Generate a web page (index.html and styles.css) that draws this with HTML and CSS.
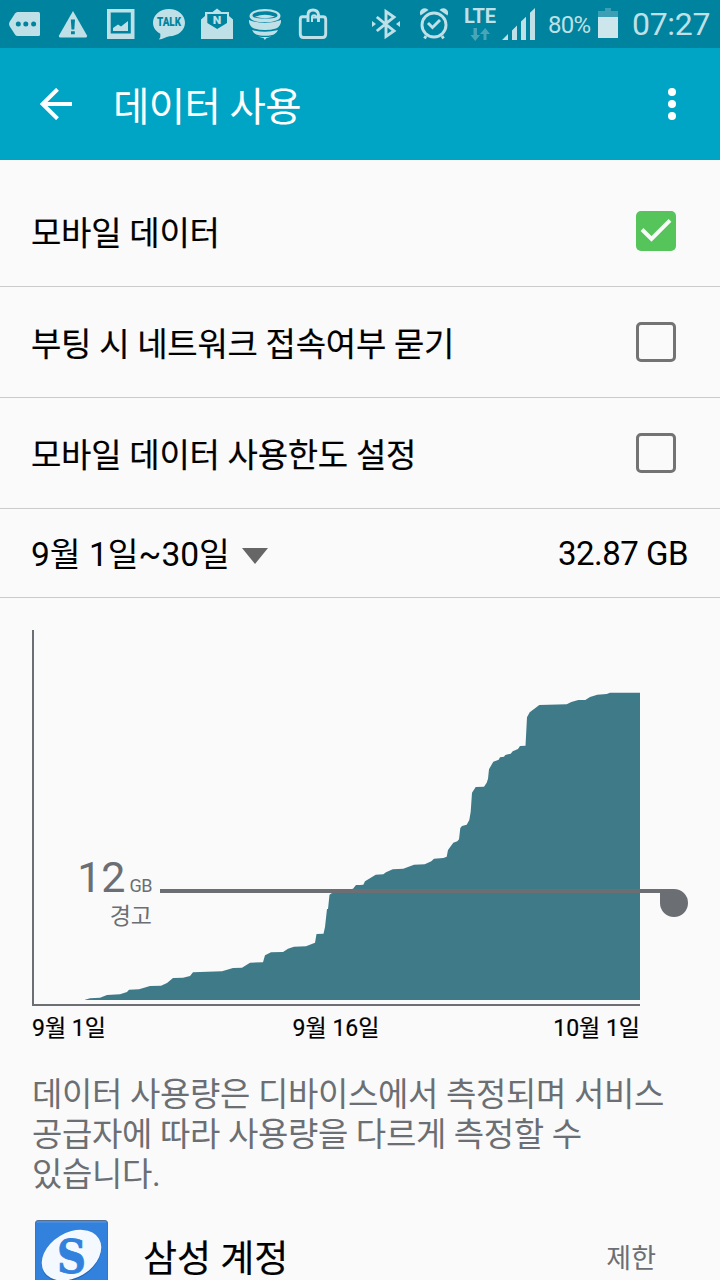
FILE: index.html
```html
<!DOCTYPE html>
<html lang="ko">
<head>
  <meta charset="UTF-8" />
  <meta name="viewport" content="width=device-width, initial-scale=1.0"/>
  <title>데이터 사용</title>
  <link rel="stylesheet" href="styles.css">
</head>
<body>
  <div class="status-bar">
    <div class="status-left">
      <!-- more notifications -->
      <svg class="status-icon" viewBox="0 0 48 48">
        <path class="fill" d="M17.500 12H38.500Q40 12 40 13.500V34.500Q40 36 38.500 36H17.500Q16 36 15 34.500L9.500 26Q8.500 24 9.500 22L15 13.500Q16 12 17.500 12Z"/>
        <circle class="hole" cx="18.300" cy="24" r="2.500"/>
        <circle class="hole" cx="25.800" cy="24" r="2.500"/>
        <circle class="hole" cx="33.600" cy="24" r="2.500"/>
      </svg>
      <!-- warning -->
      <svg class="status-icon" viewBox="0 0 48 48">
        <path class="fill" d="M25 11L39 35.500Q39.300 37.500 38 37.500H12Q10.700 37.500 11 35.500Z"/>
        <path class="hole" d="M22.800 19.500H27L26.300 29.500H23.500ZM23 31.300H26.800V34.300H23Z"/>
      </svg>
      <!-- screenshot saved -->
      <svg class="status-icon" viewBox="0 0 48 48">
        <path class="fill" fill-rule="evenodd" d="M11 9H38.500V39H11ZM14.700 12.500V33.500H34.800V12.500Z"/>
        <path class="fill" d="M17 31V28L22 24.500L25 26.500L32 21V31Z"/>
      </svg>
      <!-- talk -->
      <svg class="status-icon" viewBox="0 0 48 48">
        <path class="fill" d="M25 9C34 9 41 15 41 22.800C41 30.500 34 36 25.500 36.300C21.500 36.800 19 39.500 15 39.500Q17 37 16.300 33.800C12 31.500 9 27.500 9 22.800C9 15 16 9 25 9Z"/>
        <text class="talk-text" x="25" y="26.300" textLength="24" lengthAdjust="spacingAndGlyphs">TALK</text>
      </svg>
      <!-- mail -->
      <svg class="status-icon" viewBox="0 0 48 48">
        <path class="fill" d="M9 19.500L13 16V12H20.500L25 8.500L29.500 12H37V16L41 19.500V39H9Z"/>
        <path class="hole" d="M15.300 14H35V23L25.200 29L15.300 23Z"/>
        <text class="mail-text" x="25" y="23.500" textLength="8.500" lengthAdjust="spacingAndGlyphs">N</text>
      </svg>
      <!-- honeycomb pot -->
      <svg class="status-icon" viewBox="0 0 48 48">
        <path class="fill" fill-rule="evenodd" d="M25 9C34 9 40.500 12 40.500 16C40.500 20.500 33 22.300 25 22.300S9.500 20.500 9.500 16C9.500 12 16 9 25 9ZM25 11.300C18 11.300 12.500 13 12.500 15.500S18 18.500 25 18.500S37.500 18 37.500 15.500S32 11.300 25 11.300Z"/>
        <path class="fill" d="M15 16.800Q25 12.500 35 16.800Q25 19.500 15 16.800ZM9 20Q25 26 41 20Q41.500 26 36 28.500Q25 31.500 14 28.500Q8.500 26 9 20ZM12 30Q25 33.500 38 30Q36 34.500 31 35.300Q25 36.300 19 35.300Q14 34.500 12 30ZM18.500 36.500Q25 37.500 31.500 36.500Q28 37.800 26.500 38L24.800 40L23.500 38Q21 37.800 18.500 36.500Z"/>
      </svg>
      <!-- app store bag -->
      <svg class="status-icon" viewBox="0 0 48 48">
        <path class="line" d="M20 16.700H14.500Q12.300 16.700 12.300 19.500V34Q12.300 37.500 15.500 37.500H34.500Q37.700 37.500 37.700 34V19.500Q37.700 16.700 35 16.700H30.500V22"/>
        <path class="line" d="M20 22V15Q20 10 25 10Q30 10 30.500 15V18"/>
        <path class="line thin" d="M24 22V17Q24 15 26.500 15.200Q28 15.200 28.500 17M24 17.500H30"/>
      </svg>
    </div>
    <div class="status-right">
      <!-- bluetooth -->
      <svg class="status-icon" viewBox="0 0 48 48">
        <path class="line" d="M14.800 17L32 31L24 36.500V11.500L32 17L14.800 31"/>
        <path class="fill" d="M10 21L14 24L10 27ZM38 21L34 24L38 27Z"/>
      </svg>
      <!-- alarm -->
      <svg class="status-icon" viewBox="0 0 48 48">
        <circle class="line" cx="24" cy="25" r="12"/>
        <path class="line" d="M18 23L22.500 27.500L30 20"/>
        <path class="line" d="M16 36L14.500 38.500M32 36L33.500 38.500"/>
        <path class="fill" d="M10.500 15.500Q8.500 10.500 13 8.500Q16.500 7.500 18.500 10ZM37.500 15.500Q39.500 10.500 35 8.500Q31.500 7.500 29.500 10Z"/>
      </svg>
      <div class="lte">
        <span>LTE</span>
        <svg class="lte-arrows" viewBox="0 0 20 14">
          <path d="M3.500 0H7V7H10L5.200 13L0.500 7H3.500ZM13.500 12V6H10L15.200 0L20 6H16.500V12Z"/>
        </svg>
      </div>
      <svg class="signal" viewBox="0 0 34 33">
        <path class="fill" d="M0 32L6 26V32ZM10 32V22.500L15 17.500V32ZM19 32V13.500L24 8.700V32ZM28 32V4.700L33 0V32Z"/>
      </svg>
      <span class="battery-text">80%</span>
      <svg class="battery" viewBox="0 0 20 30">
        <path class="battery-empty" d="M7 0H13V3H20V9H0V3H7Z"/>
        <path class="battery-full" d="M0 9H20V30H0Z"/>
      </svg>
      <span class="clock">07:27</span>
    </div>
  </div>

  <header>
    <button class="back-btn" aria-label="뒤로">
      <svg width="32" height="32" viewBox="0 0 32 32">
        <path d="M32 16H3M17.500 1.300L2.500 16L17.500 30.700"/>
      </svg>
    </button>
    <h1 class="title">데이터 사용</h1>
    <button class="menu-btn" aria-label="메뉴">
      <svg width="8" height="32" viewBox="0 0 8 32">
        <circle cx="4" cy="4" r="4"/>
        <circle cx="4" cy="16" r="4"/>
        <circle cx="4" cy="28" r="4"/>
      </svg>
    </button>
  </header>

  <div class="settings">
    <div class="row">
      <span class="row-label">모바일 데이터</span>
      <span class="checkbox checked">
        <svg width="40" height="40" viewBox="0 0 40 40"><path d="M6 18.500L15.500 28L34 9.300"/></svg>
      </span>
    </div>
    <div class="row">
      <span class="row-label">부팅 시 네트워크 접속여부 묻기</span>
      <span class="checkbox"></span>
    </div>
    <div class="row">
      <span class="row-label">모바일 데이터 사용한도 설정</span>
      <span class="checkbox"></span>
    </div>
    <div class="row cycle-row">
      <span class="cycle">9월 1일~30일</span>
      <span class="arrow-down"></span>
      <span class="total">32.87 GB</span>
    </div>
  </div>

  <div class="chart">
    <svg class="chart-svg" width="720" height="410" viewBox="0 0 720 410">
      <path class="area" d="M85 401.700L90 400.300L100 399.700L107 397L120 396.300L127 394L129 391.700L139 391.300L150 388L161 387.700L167 385L173 380L183 379.700L190 378L193 374.300L222 373.300L233 370L242 369.700L250 364.700L263 364.300L265 357.300L271 354.300L283 354L288 350.700L294 348.700L306 348.300L315 344.700L316.500 336L323.500 335.700L325 329L327 311H328L329.500 296.700L331.500 295.300L353 290.700L356 287H360L363.300 286.700L365 283.300L375.700 276.700L383.300 276.300L386 274.300L392.700 271.300L403.300 270.700L414 266.700L424.700 266.300L431.300 263.300L434 260.700L443.300 260L446.700 258.700L448 252L453.300 244.700L457.300 243.300L459 241.300L460.300 230L462 228L466.700 226.700L469.300 222L470.700 213.700L472 194.700L475.700 189L484 188.700L486.700 184.700L488 180.700L489 171.300L493.300 163.700L498.700 161.700L500 159.300L504 158.700L505.300 157L510.700 155.700L512.700 153.300L518 151L520 148L525.500 147.700L527 119.300L529.700 114.300L536.700 109L539.300 107L566.700 106.300L571.300 104L578.300 102H585.300L590 99L597.300 96.700L606.700 96L610 94.700H640V402H85Z"/>
      <path class="axis" d="M33 32V407H640"/>
      <path class="limit" d="M160 291H674A14 14 0 1 1 660 305V295H160Z"/>
    </svg>
    <div class="warning">
      <div class="warning-amount">12<span class="unit">GB</span></div>
      <div class="warning-label">경고</div>
    </div>
    <div class="dates">
      <span>9월 1일</span>
      <span>9월 16일</span>
      <span>10월 1일</span>
    </div>
  </div>

  <p class="note">데이터 사용량은 디바이스에서 측정되며 서비스<br>공급자에 따라 사용량을 다르게 측정할 수<br>있습니다.</p>

  <div class="app-row">
    <svg class="app-icon" width="74" height="74" viewBox="0 0 74 74">
      <rect x="1.500" y="0.500" width="72" height="73" rx="2.500" fill="#3281dd" stroke="#55718f"/>
      <path d="M3 2H72" stroke="#5a9ae8"/>
      <ellipse cx="37.500" cy="36.500" rx="32" ry="22.500" transform="rotate(-31 37.500 36.500)" fill="#1f65b8"/>
      <ellipse cx="37.500" cy="35.200" rx="32" ry="22.500" transform="rotate(-31 37.500 35.200)" fill="#f4f9ff"/>
      <text class="logo-letter" x="37.500" y="53" textLength="29" lengthAdjust="spacingAndGlyphs">S</text>
    </svg>
    <span class="app-name">삼성 계정</span>
    <span class="app-state">제한</span>
  </div>
</body>
</html>
```
FILE: styles.css
```css
* {
  box-sizing: border-box;
}
body {
  margin: 0;
  width: 720px;
  height: 1280px;
  overflow: hidden;
  background-color: #fafafa;
  font-family: Roboto, 'Noto Sans CJK KR', sans-serif;
  color: #000;
}
.status-bar {
  height: 48px;
  background-color: #00839e;
  color: #bfe0e7;
  display: flex;
  justify-content: space-between;
}
.status-left,
.status-right {
  display: flex;
  align-items: center;
}
.status-right {
  padding-right: 10px;
}
.status-icon {
  width: 48px;
  height: 48px;
}
.fill {
  fill: #bfe0e7;
}
.hole {
  fill: #00839e;
}
.line {
  fill: none;
  stroke: #bfe0e7;
  stroke-width: 2.9;
}
.thin {
  stroke-width: 2;
}
.talk-text {
  font-size: 12px;
  font-weight: 900;
  text-anchor: middle;
  fill: #00839e;
}
.mail-text {
  font-size: 10px;
  font-weight: 900;
  text-anchor: middle;
  fill: #bfe0e7;
}
.lte {
  width: 36px;
  height: 48px;
  margin-left: 4px;
  padding-top: 6px;
  display: flex;
  flex-direction: column;
  align-items: center;
  font-size: 20px;
  font-weight: bold;
  line-height: 21px;
}
.lte-arrows {
  width: 20px;
  height: 14px;
  margin-top: 1px;
  fill: #4aa5b8;
}
.signal {
  width: 34px;
  height: 33px;
  margin-left: 4px;
}
.battery-text {
  width: 44px;
  margin: 2px 0 0 12px;
  font-size: 24px;
  letter-spacing: -0.7px;
}
.battery {
  width: 20px;
  height: 30px;
  margin: 0 14px 2px 6px;
}
.battery-empty {
  fill: #3c9fb3;
}
.battery-full {
  fill: #cde6eb;
}
.clock {
  width: 78px;
  font-size: 32px;
  letter-spacing: -0.3px;
}
header {
  height: 112px;
  padding: 0 44px 0 40px;
  background-color: #00a5c5;
  color: #fff;
  display: flex;
  align-items: center;
}
.back-btn,
.menu-btn {
  display: flex;
  padding: 0;
  background: none;
  border: none;
  cursor: pointer;
}
.back-btn path {
  fill: none;
  stroke: #fff;
  stroke-width: 4;
}
.menu-btn {
  margin-left: auto;
}
.menu-btn svg {
  fill: #fff;
}
.title {
  margin: 0 0 2px 41px;
  font-size: 39.5px;
  font-weight: normal;
  letter-spacing: -0.6px;
}
.settings {
  padding-top: 16px;
}
.row {
  height: 111px;
  padding: 0 44px 0 31px;
  border-bottom: 1px solid #cbcbcb;
  display: flex;
  align-items: center;
}
.row-label {
  margin-bottom: 1px;
  font-size: 33px;
  letter-spacing: -0.25px;
  -webkit-text-stroke: 0.2px;
}
.checkbox {
  width: 40px;
  height: 40px;
  margin-left: auto;
  border: 3px solid #737373;
  border-radius: 5px;
}
.checkbox.checked {
  border: none;
  background-color: #55c45a;
}
.checkbox path {
  fill: none;
  stroke: #fafafa;
  stroke-width: 4;
}
.cycle-row {
  height: 89px;
  padding-right: 32px;
}
.cycle {
  margin-bottom: 3px;
  font-size: 33.5px;
}
.arrow-down {
  margin: 5px 0 0 12px;
  border: 13px solid transparent;
  border-top: 16px solid #666;
  border-bottom: none;
}
.total {
  margin: 1px 0 0 auto;
  font-size: 33px;
  letter-spacing: -0.5px;
}
.chart {
  position: relative;
}
.chart-svg {
  display: block;
}
.area {
  fill: #3f7a89;
}
.axis {
  fill: none;
  stroke: #6b6f73;
  stroke-width: 2;
}
.limit {
  fill: #6b6f73;
}
/* sits over the left part of the graph, next to the limit line */
.warning {
  position: absolute;
  top: 254px;
  right: 568px;
  color: #6b6f73;
  text-align: right;
}
.warning-amount {
  font-size: 43px;
  line-height: 50px;
}
.unit {
  margin-left: 4px;
  font-size: 18px;
  letter-spacing: -0.5px;
}
.warning-label {
  margin-top: -7px;
  font-size: 23px;
  line-height: 26px;
}
.dates {
  width: 608px;
  height: 40px;
  margin-left: 32px;
  display: flex;
  font-size: 23px;
  line-height: 42px;
  -webkit-text-stroke: 0.2px;
}
.dates span {
  flex: 1;
  text-align: center;
}
.dates span:first-child {
  text-align: left;
}
.dates span:last-child {
  text-align: right;
}
.note {
  margin: 27px 32px 0;
  font-size: 33px;
  line-height: 40px;
  letter-spacing: -0.33px;
  color: #6b6f73;
}
.app-row {
  height: 74px;
  margin-top: 25px;
  padding: 0 64px 0 34px;
  display: flex;
  align-items: center;
}
.logo-letter {
  font-family: 'DejaVu Serif', serif;
  font-size: 47px;
  font-weight: bold;
  text-anchor: middle;
  fill: #3281dd;
  stroke: #3281dd;
  stroke-width: 0.8;
}
.app-name {
  margin: 0 0 2px 35px;
  font-size: 37px;
  -webkit-text-stroke: 0.2px;
}
.app-state {
  margin: 0 0 2px auto;
  font-size: 27px;
  color: #6b6f73;
}
```
